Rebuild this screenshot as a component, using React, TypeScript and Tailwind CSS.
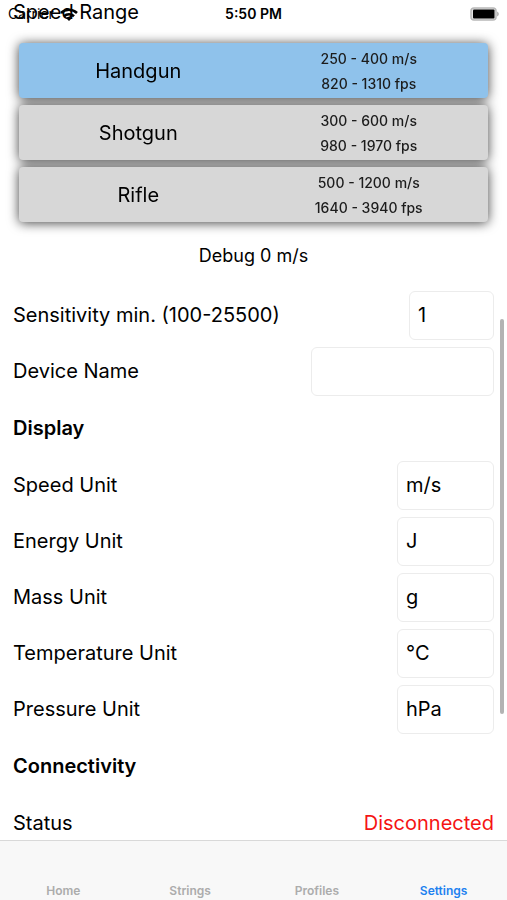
import React, { useState } from "react";

interface SpeedRange {
  name: string;
  metric: string;
  imperial: string;
}

interface Field {
  id: string;
  label: string;
  value: string;
  width: string;
}

const ranges: SpeedRange[] = [
  { name: "Handgun", metric: "250 - 400 m/s", imperial: "820 - 1310 fps" },
  { name: "Shotgun", metric: "300 - 600 m/s", imperial: "980 - 1970 fps" },
  { name: "Rifle", metric: "500 - 1200 m/s", imperial: "1640 - 3940 fps" },
];

const deviceFields: Field[] = [
  { id: "sensitivity", label: "Sensitivity min. (100-25500)", value: "1", width: "w-[85px]" },
  { id: "device-name", label: "Device Name", value: "", width: "w-[183px]" },
];

const displayFields: Field[] = [
  { id: "speed-unit", label: "Speed Unit", value: "m/s", width: "w-[97px]" },
  { id: "energy-unit", label: "Energy Unit", value: "J", width: "w-[97px]" },
  { id: "mass-unit", label: "Mass Unit", value: "g", width: "w-[97px]" },
  { id: "temperature-unit", label: "Temperature Unit", value: "°C", width: "w-[97px]" },
  { id: "pressure-unit", label: "Pressure Unit", value: "hPa", width: "w-[97px]" },
];

const tabs = ["Home", "Strings", "Profiles", "Settings"];

const FieldRow: React.FC<{ field: Field }> = ({ field }) => (
  <div className="flex h-14 items-center justify-between">
    <label htmlFor={field.id}>{field.label}</label>
    <input id={field.id} type="text" defaultValue={field.value} className={`h-[49px] rounded-md border border-[#ececec] bg-white px-2 outline-none ${field.width}`} />
  </div>
);

const SectionTitle: React.FC<{ children: React.ReactNode }> = ({ children }) => <h2 className="flex h-[58px] items-center font-semibold">{children}</h2>;

const StatusBar: React.FC = () => (
  <header className="pointer-events-none absolute inset-x-0 top-0 grid h-7 grid-cols-3 items-center px-2 text-sm">
    <div className="flex items-center gap-1.5">
      <span>Carrier</span>
      <svg width="18" height="13" viewBox="0 0 18 13" fill="none" stroke="black" strokeWidth="2.6">
        <path d="M1 5a11.5 11.5 0 0 1 16 0" />
        <path d="M4 8.300a7.200 7.200 0 0 1 10 0" />
        <path d="M9 13 6.200 10.200a4 4 0 0 1 5.600 0z" fill="black" stroke="none" />
      </svg>
    </div>
    <span className="text-center font-semibold">5:50 PM</span>
    <svg className="justify-self-end" width="29" height="14" viewBox="0 0 29 14">
      <rect x="1" y="1" width="25" height="12" rx="3" fill="#e4e4e4" stroke="#b8b8b8" strokeWidth="1.5" />
      <rect x="3" y="2.5" width="21.5" height="9" rx="1" fill="black" />
      <path d="M27 4.500v5c1.200-.4 1.900-1.400 1.900-2.500S28.200 4.900 27 4.500z" fill="#b8b8b8" />
    </svg>
  </header>
);

const App: React.FC = () => {
  const [selected, setSelected] = useState("Handgun");
  const [activeTab, setActiveTab] = useState("Settings");

  return (
    <div className="relative flex h-screen flex-col overflow-hidden bg-white font-[Inter,sans-serif] text-black">
      <main className="relative min-h-0 flex-1 overflow-hidden px-[13px] text-xl leading-6">
        <h2>Speed Range</h2>

        {/* One shadow for the whole group, so the cards don't shade each other */}
        <div className="mx-1.5 mt-[19px] flex flex-col gap-[7px] drop-shadow-[0_1px_6px_rgba(0,0,0,0.75)]">
          {ranges.map((range) => (
            <button
              key={range.name}
              type="button"
              onClick={() => setSelected(range.name)}
              className={`grid h-[55px] grid-cols-2 items-center rounded px-1 ${selected === range.name ? "bg-[#8fc2eb]" : "bg-[#d7d7d7]"}`}
            >
              <span>{range.name}</span>
              <span className="flex flex-col text-sm leading-[25px] font-medium text-[#1c1c1c]">
                <span>{range.metric}</span>
                <span>{range.imperial}</span>
              </span>
            </button>
          ))}
        </div>

        <p className="mt-[22px] mb-[19px] text-center text-lg leading-6">Debug 0 m/s</p>

        {deviceFields.map((field) => (
          <FieldRow key={field.id} field={field} />
        ))}

        <SectionTitle>Display</SectionTitle>
        {displayFields.map((field) => (
          <FieldRow key={field.id} field={field} />
        ))}

        <SectionTitle>Connectivity</SectionTitle>
        <div className="flex h-14 items-center justify-between">
          <span>Status</span>
          <span className="text-[#f51414]">Disconnected</span>
        </div>

        <div className="absolute top-[38%] right-[3px] h-[47%] w-1 rounded-full bg-[#b3b3b3]" />
      </main>

      <nav className="grid h-[60px] shrink-0 grid-cols-4 items-end border-t border-[#d9d9d9] bg-[#f8f8f8]">
        {tabs.map((tab) => (
          <button key={tab} type="button" onClick={() => setActiveTab(tab)} className={`text-xs leading-[18px] font-semibold ${activeTab === tab ? "text-[#1e82f0]" : "text-[#acacac]"}`}>
            {tab}
          </button>
        ))}
      </nav>

      <StatusBar />
    </div>
  );
};

export default App;
